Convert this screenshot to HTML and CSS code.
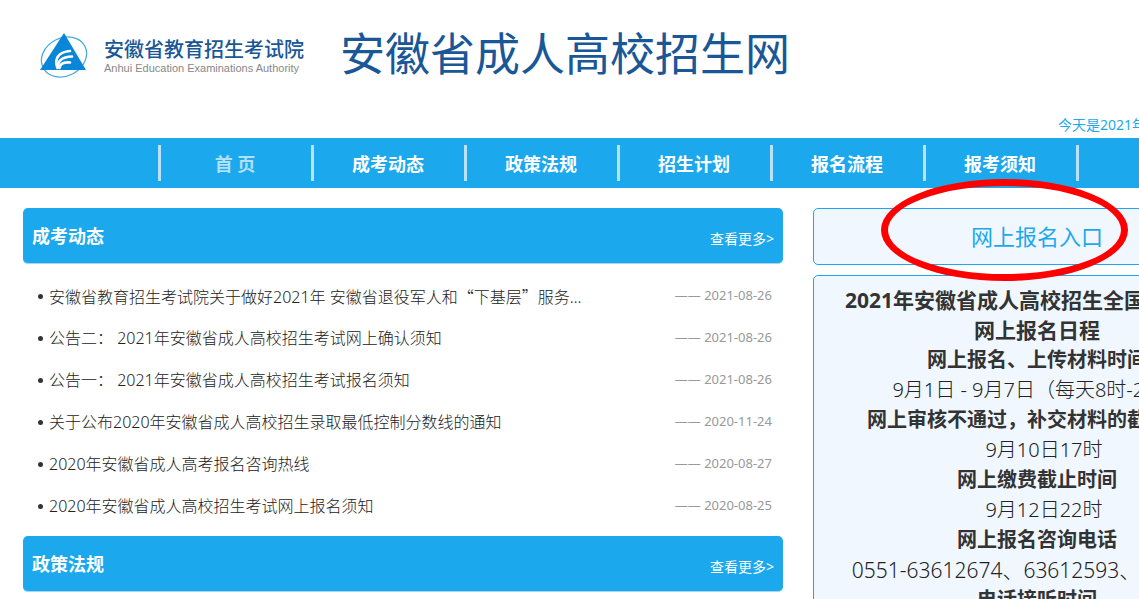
FILE: index.html
```html
<!DOCTYPE html>
<html lang="zh-CN">
<head>
<meta charset="utf-8">
<title>安徽省成人高校招生网</title>
<link rel="stylesheet" href="styles.css">
</head>
<body>
<div class="page">
  <header class="header">
    <div class="brand">
      <svg class="emblem" viewBox="0 0 48 48" aria-hidden="true">
        <ellipse cx="24" cy="25" rx="23.5" ry="19" fill="none" stroke="#4aa8e0" stroke-width="1.3" transform="rotate(-28 24 25)"/>
        <path d="M24 1 L46 38 H0 Z" fill="#0a86d8"/>
        <g fill="none" stroke="#fff" stroke-width="2.6" stroke-linecap="round">
          <path d="M17.500 36 C14 27 18 20 30 19"/>
          <path d="M18.500 35 C17 29 22 25 32 24.500"/>
          <path d="M19.500 36 C20 32 24 30 30 30.500"/>
        </g>
      </svg>
      <div class="org">
        <span class="org-name">安徽省教育招生考试院</span>
        <span class="org-en">Anhui Education Examinations Authority</span>
      </div>
      <h1 class="site-name">安徽省成人高校招生网</h1>
    </div>
    <p class="today">今天是2021年</p>
  </header>

  <nav class="nav">
    <a class="nav-link current" href="#">首 页</a>
    <a class="nav-link" href="#">成考动态</a>
    <a class="nav-link" href="#">政策法规</a>
    <a class="nav-link" href="#">招生计划</a>
    <a class="nav-link" href="#">报名流程</a>
    <a class="nav-link" href="#">报考须知</a>
  </nav>

  <main class="content">
    <div class="column">
      <section>
        <div class="bar"><h2>成考动态</h2><a href="#">查看更多&gt;</a></div>
        <ul class="news">
          <li><a href="#">安徽省教育招生考试院关于做好2021年 安徽省退役军人和<span class="cjk">“</span>下基层<span class="cjk">”</span>服务…</a><time>—— 2021-08-26</time></li>
          <li><a href="#">公告二： 2021年安徽省成人高校招生考试网上确认须知</a><time>—— 2021-08-26</time></li>
          <li><a href="#">公告一： 2021年安徽省成人高校招生考试报名须知</a><time>—— 2021-08-26</time></li>
          <li><a href="#">关于公布2020年安徽省成人高校招生录取最低控制分数线的通知</a><time>—— 2020-11-24</time></li>
          <li><a href="#">2020年安徽省成人高考报名咨询热线</a><time>—— 2020-08-27</time></li>
          <li><a href="#">2020年安徽省成人高校招生考试网上报名须知</a><time>—— 2020-08-25</time></li>
        </ul>
      </section>
      <section>
        <div class="bar"><h2>政策法规</h2><a href="#">查看更多&gt;</a></div>
      </section>
    </div>

    <aside class="side">
      <div class="entry">
        <a href="#">网上报名入口</a>
        <span class="ring"></span>
      </div>
      <section class="schedule">
        <h2>2021年安徽省成人高校招生全国统一考试<br>网上报名日程</h2>
        <h3>网上报名、上传材料时间</h3>
        <p>9月1日 - 9月7日（每天8时-22时）</p>
        <h3>网上审核不通过，补交材料的截止时间</h3>
        <p>9月10日17时</p>
        <h3>网上缴费截止时间</h3>
        <p>9月12日22时</p>
        <h3>网上报名咨询电话</h3>
        <p class="phones">0551-63612674、63612593、63612591</p>
        <h3>电话接听时间</h3>
      </section>
    </aside>
  </main>
</div>
</body>
</html>
```
FILE: styles.css
```css
* { box-sizing: border-box; margin: 0; padding: 0; }

html { scrollbar-width: none; }

body {
  overflow-x: hidden;
  background: #fff;
  color: #222;
  font: 300 16px/1.5 "Noto Sans", "Noto Sans CJK SC", sans-serif;
}

a { color: inherit; text-decoration: none; }

.page { min-width: 1284px; }

.cjk { font-family: "Noto Sans CJK SC", sans-serif; }

.header { padding: 24px 0 2px 40px; }

.brand { display: flex; align-items: center; height: 60px; }

.emblem { width: 48px; height: 48px; margin: 4px 16px 0 0; }

.org { display: flex; flex-direction: column; width: 236px; padding-top: 4px; }

.org-name { color: #1a5796; font-size: 20px; font-weight: 500; line-height: 24px; }

.org-en { color: #888; font: 11px/12px "Liberation Sans", sans-serif; }

.site-name { color: #1a5796; font-size: 45px; font-weight: 400; line-height: 60px; }

.today {
  margin-top: 30px;
  padding-left: 1018px;
  color: #1ca8ec;
  font-size: 14px;
  font-weight: 400;
  line-height: 22px;
  white-space: nowrap;
}

.nav {
  display: flex;
  height: 50px;
  padding: 7px 0 7px 158px;
  background: #1ca8ec;
}

.nav-link {
  width: 153px;
  padding-right: 2px;
  border-left: 3px solid #b9e2f8;
  color: #fff;
  font-size: 18px;
  font-weight: 700;
  line-height: 38px;
  text-align: center;
}

.nav-link:last-child { width: 156px; border-right: 3px solid #b9e2f8; }

.current { color: #b0e0fa; }

.content {
  display: grid;
  grid-template-columns: 760fr 448fr;
  gap: 30px;
  padding: 20px 23px;
}

.bar {
  display: flex;
  justify-content: space-between;
  height: 56px;
  padding: 0 9px;
  border-bottom: 1px solid #a5d8f2;
  border-radius: 5px;
  background: #1ca8ec;
  color: #fff;
}

.bar h2 { font-size: 18px; line-height: 56px; }

.bar a { font-size: 14px; font-weight: 400; line-height: 62px; }

.news { padding: 11px 11px 9px 15px; list-style: none; }

.news li { display: flex; align-items: center; height: 42px; }

.news li::before {
  width: 5px;
  height: 5px;
  margin-right: 6px;
  border-radius: 50%;
  background: #333;
  content: "";
}

.news time { margin-left: auto; color: #999; font-size: 13px; font-weight: 400; }

.side { display: flex; flex-direction: column; gap: 10px; }

.entry, .schedule {
  border: 1px solid #1ca8ec;
  border-radius: 5px;
  background: #f0f7ff;
  text-align: center;
}

.entry {
  position: relative;
  color: #1ca8ec;
  font-size: 22px;
  font-weight: 400;
  line-height: 55px;
}

.ring {
  position: absolute;
  top: -30px;
  left: 67px;
  width: 247px;
  height: 102px;
  border: 7px solid #f00;
  border-radius: 50%;
  pointer-events: none;
}

.schedule { padding: 9px 0; font-size: 20px; line-height: 30px; }

.schedule h2, .schedule h3 { color: #333; line-height: 30px; }

.schedule h2 { font-size: 21px; }

.schedule h3 { font-size: 20px; }

.schedule p { padding-left: 14px; }

.schedule .phones { font-size: 21px; }
```
